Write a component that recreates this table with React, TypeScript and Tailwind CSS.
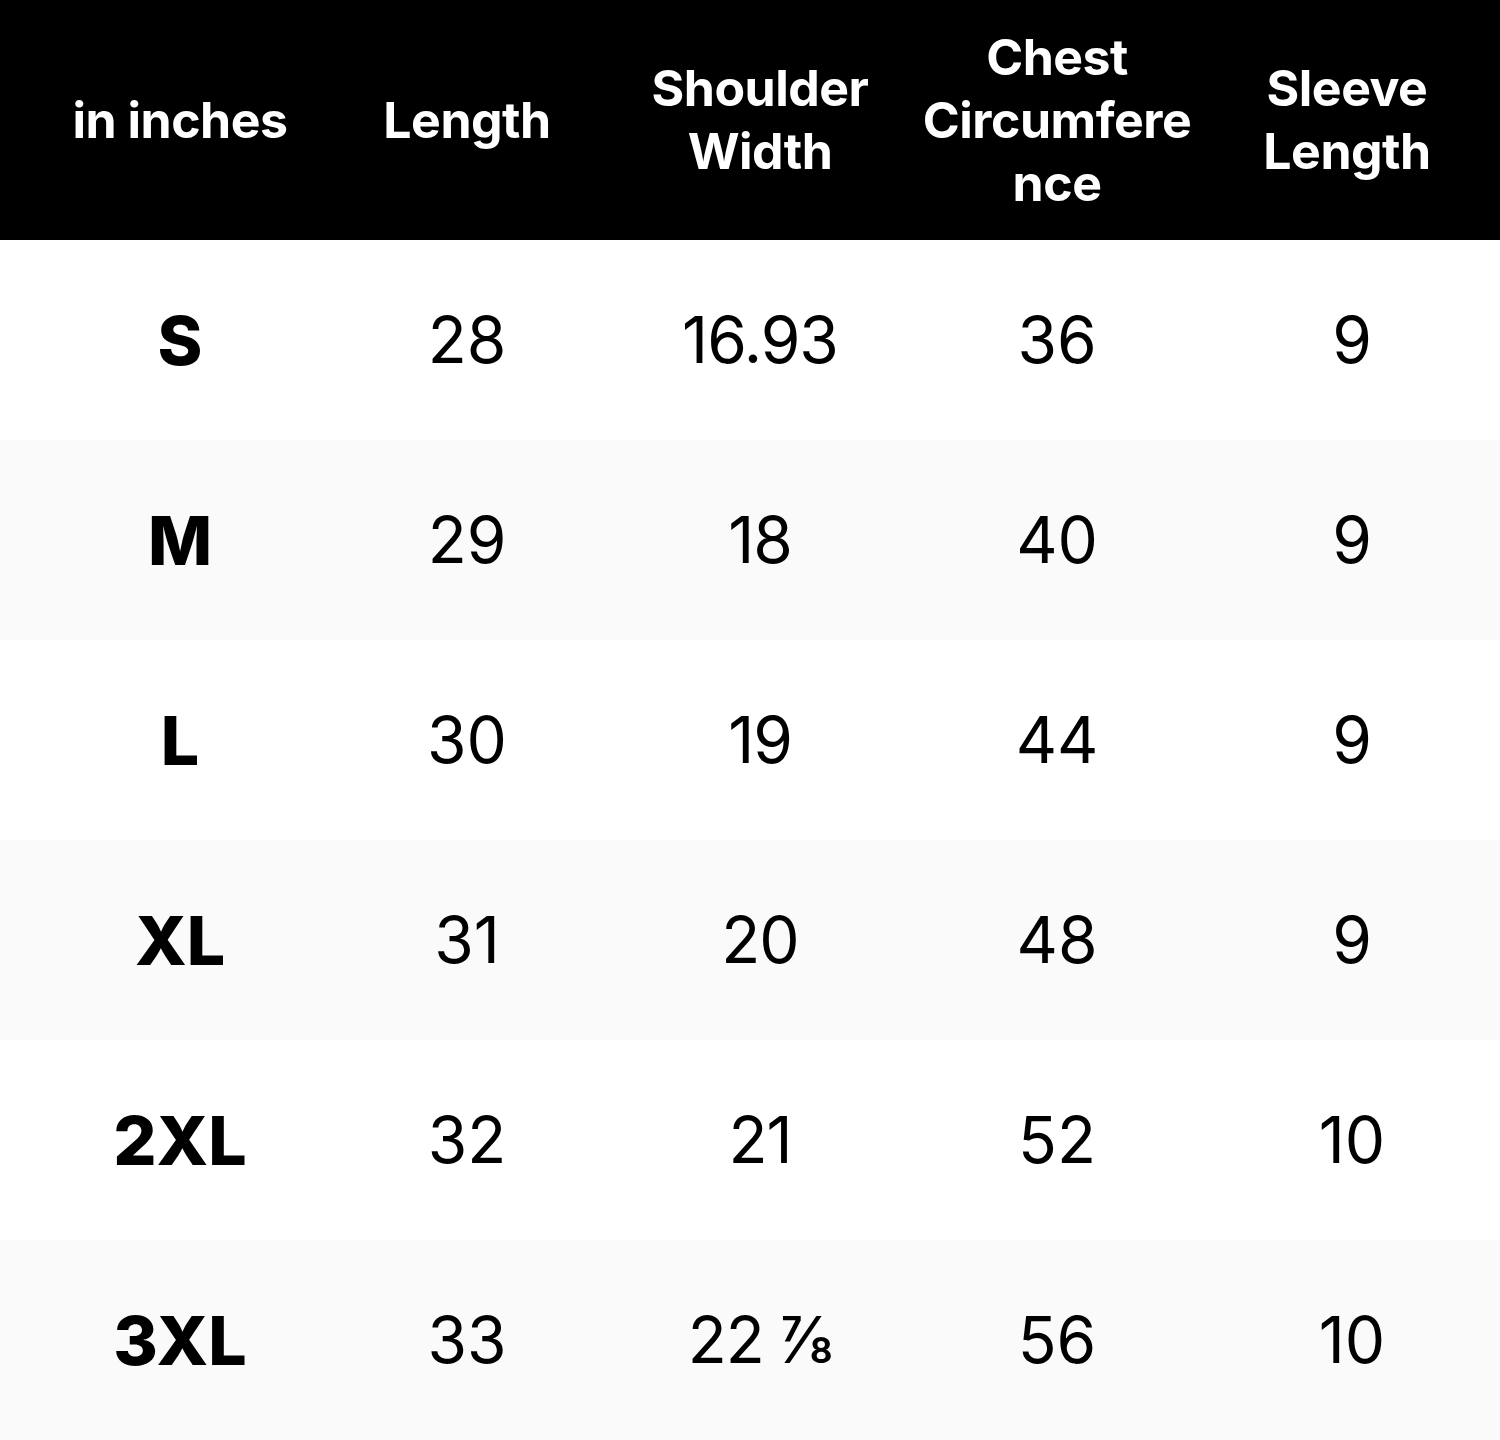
import React from "react";

const rows: [string, string, string, string, string][] = [
  ["S", "28", "16.93", "36", "9"],
  ["M", "29", "18", "40", "9"],
  ["L", "30", "19", "44", "9"],
  ["XL", "31", "20", "48", "9"],
  ["2XL", "32", "21", "52", "10"],
  ["3XL", "33", "22 ⅞", "56", "10"],
];

const grid = "grid grid-cols-[360px_214px_372px_222px_332px]";
const cell = "flex items-center justify-center whitespace-nowrap";

export default function App() {
  return (
    <div className="w-[1500px] h-[1440px] bg-white font-['Inter',sans-serif] overflow-hidden">
      <div className={`${grid} h-[240px] bg-black text-white font-bold text-[50px] leading-[63px] tracking-[-0.5px]`}>
        <div className={cell}>in inches</div>
        <div className={cell}>Length</div>
        <div className={`${cell} text-center`}>
          Shoulder
          <br />
          Width
        </div>
        <div className={`${cell} text-center`}>
          Chest
          <br />
          Circumfere
          <br />
          nce
        </div>
        <div className={`${cell} text-center pl-[26px]`}>
          Sleeve
          <br />
          Length
        </div>
      </div>
      {rows.map((r, i) => (
        <div
          key={r[0]}
          className={`${grid} h-[200px] text-black ${i % 2 === 1 ? "bg-[#fafafa]" : "bg-white"}`}
        >
          <div className={`${cell} font-extrabold text-[68px]`}>{r[0]}</div>
          <div className={`${cell} font-normal text-[64px]`}>{r[1]}</div>
          <div className={`${cell} font-normal text-[64px] tracking-[-1px]`}>{r[2]}</div>
          <div className={`${cell} font-normal text-[64px]`}>{r[3]}</div>
          <div className={`${cell} font-normal text-[64px] pl-[36px]`}>{r[4]}</div>
        </div>
      ))}
    </div>
  );
}
